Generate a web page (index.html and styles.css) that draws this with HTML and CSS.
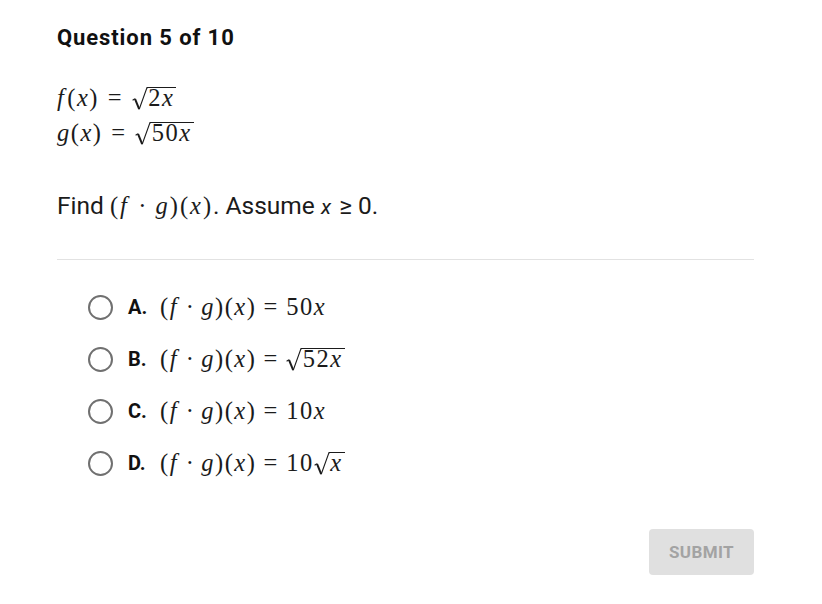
FILE: index.html
```html
<!DOCTYPE html>
<html>
<head>
<meta charset="utf-8">
<link rel="stylesheet" href="styles.css">
</head>
<body>
<main class="page">
  <h1 class="title">Question 5 of 10</h1>
  <div class="defs">
    <div class="math"><i class="f">f</i>(<i>x</i>)<span class="op">=</span><span class="sqrt"><svg class="surd" viewBox="0 0 16 23" preserveAspectRatio="none"><path d="M0.6 13.2 L3 11.8" stroke="#1b1b1b" stroke-width="1.1" fill="none"/><path d="M3 11.8 L7.2 22.2" stroke="#1b1b1b" stroke-width="2" fill="none"/><path d="M7.2 22.2 L15 0.65 L16 0.65" stroke="#1b1b1b" stroke-width="1.1" fill="none"/></svg><span class="rad">2<i>x</i></span></span></div>
    <div class="math"><i>g</i>(<i>x</i>)<span class="op">=</span><span class="sqrt"><svg class="surd" viewBox="0 0 16 23" preserveAspectRatio="none"><path d="M0.6 13.2 L3 11.8" stroke="#1b1b1b" stroke-width="1.1" fill="none"/><path d="M3 11.8 L7.2 22.2" stroke="#1b1b1b" stroke-width="2" fill="none"/><path d="M7.2 22.2 L15 0.65 L16 0.65" stroke="#1b1b1b" stroke-width="1.1" fill="none"/></svg><span class="rad">50<i>x</i></span></span></div>
  </div>
  <p class="prompt">Find <span class="math">(<i class="f">f</i><span class="dot">·</span><i>g</i>)(<i>x</i>)</span>. Assume <i class="sv">x</i> ≥ 0.</p>
  <hr class="divider">
  <ul class="options">
    <li class="option"><span class="radio"></span><span class="letter">A.</span><span class="math">(<i class="f">f</i><span class="dot">·</span><i>g</i>)(<i>x</i>)<span class="op">=</span>50<i>x</i></span></li>
    <li class="option"><span class="radio"></span><span class="letter">B.</span><span class="math">(<i class="f">f</i><span class="dot">·</span><i>g</i>)(<i>x</i>)<span class="op">=</span><span class="sqrt"><svg class="surd" viewBox="0 0 16 23" preserveAspectRatio="none"><path d="M0.6 13.2 L3 11.8" stroke="#1b1b1b" stroke-width="1.1" fill="none"/><path d="M3 11.8 L7.2 22.2" stroke="#1b1b1b" stroke-width="2" fill="none"/><path d="M7.2 22.2 L15 0.65 L16 0.65" stroke="#1b1b1b" stroke-width="1.1" fill="none"/></svg><span class="rad">52<i>x</i></span></span></span></li>
    <li class="option"><span class="radio"></span><span class="letter">C.</span><span class="math">(<i class="f">f</i><span class="dot">·</span><i>g</i>)(<i>x</i>)<span class="op">=</span>10<i>x</i></span></li>
    <li class="option"><span class="radio"></span><span class="letter">D.</span><span class="math">(<i class="f">f</i><span class="dot">·</span><i>g</i>)(<i>x</i>)<span class="op">=</span>10<span class="sqrt"><svg class="surd" viewBox="0 0 16 23" preserveAspectRatio="none"><path d="M0.6 13.2 L3 11.8" stroke="#1b1b1b" stroke-width="1.1" fill="none"/><path d="M3 11.8 L7.2 22.2" stroke="#1b1b1b" stroke-width="2" fill="none"/><path d="M7.2 22.2 L15 0.65 L16 0.65" stroke="#1b1b1b" stroke-width="1.1" fill="none"/></svg><span class="rad"><i>x</i></span></span></span></li>
  </ul>
  <div class="actions">
    <button class="submit">SUBMIT</button>
  </div>
</main>
</body>
</html>
```
FILE: styles.css
```css
* { box-sizing: border-box; }
html, body { margin: 0; padding: 0; background: #fff; }
body { font-family: Roboto, "Liberation Sans", sans-serif; color: #1b1b1b; }
.page { width: 822px; height: 604px; padding: 24px 68px 0 57px; }
.title { margin: 0; font-size: 22px; font-weight: 700; line-height: 28px; letter-spacing: 0.9px; color: #111; }
.defs { margin-top: 28px; display: flex; flex-direction: column; }
.defs .op { margin: 0 0.36em; }
.defs .f { margin-right: 0.14em; }
.math { font-family: "Liberation Serif", "DejaVu Serif", serif; font-size: 24.5px; line-height: 35px; letter-spacing: 0.06em; color: #1b1b1b; white-space: nowrap; }
.math i { font-style: italic; }
.math .f { margin-right: 0.08em; }
.op { margin: 0 0.3em; }
.dot { margin: 0 0.24em; }
.sqrt { display: inline-block; white-space: nowrap; }
.surd { width: 16px; height: 23px; vertical-align: -4px; margin-right: -0.5px; overflow: visible; }
.rad { display: inline-block; border-top: 1.2px solid #1b1b1b; line-height: 20px; padding: 0 2px 0 1px; }
.prompt { margin: 41px 0 0; font-size: 24.5px; line-height: 30px; color: #1b1b1b; }
.prompt .math { font-size: 24.5px; line-height: 30px; letter-spacing: 0.08em; }
.prompt .dot { margin: 0 0.3em; }
.sv { font-family: Roboto, "Liberation Sans", sans-serif; font-size: 21px; margin-right: 2px; }
.divider { margin: 37px 0 0; border: 0; border-top: 1px solid #e2e2e2; height: 0; }
.options { list-style: none; margin: 32px 0 0; padding: 0 0 0 31px; display: flex; flex-direction: column; gap: 22px; }
.option { display: flex; align-items: center; height: 30px; }
.option .math { line-height: 30px; }
.radio { width: 25px; height: 25px; border: 2.5px solid #707070; border-radius: 50%; flex: none; }
.letter { font-weight: 700; font-size: 20px; margin-left: 15px; width: 32px; color: #111; }
.actions { display: flex; justify-content: flex-end; margin-top: 51px; }
.submit { width: 105px; height: 46px; border: 0; border-radius: 4px; background: #e0e0e0; color: #a3a3a3; font-family: Roboto, "Liberation Sans", sans-serif; font-weight: 700; font-size: 17px; letter-spacing: 0.4px; }
```
